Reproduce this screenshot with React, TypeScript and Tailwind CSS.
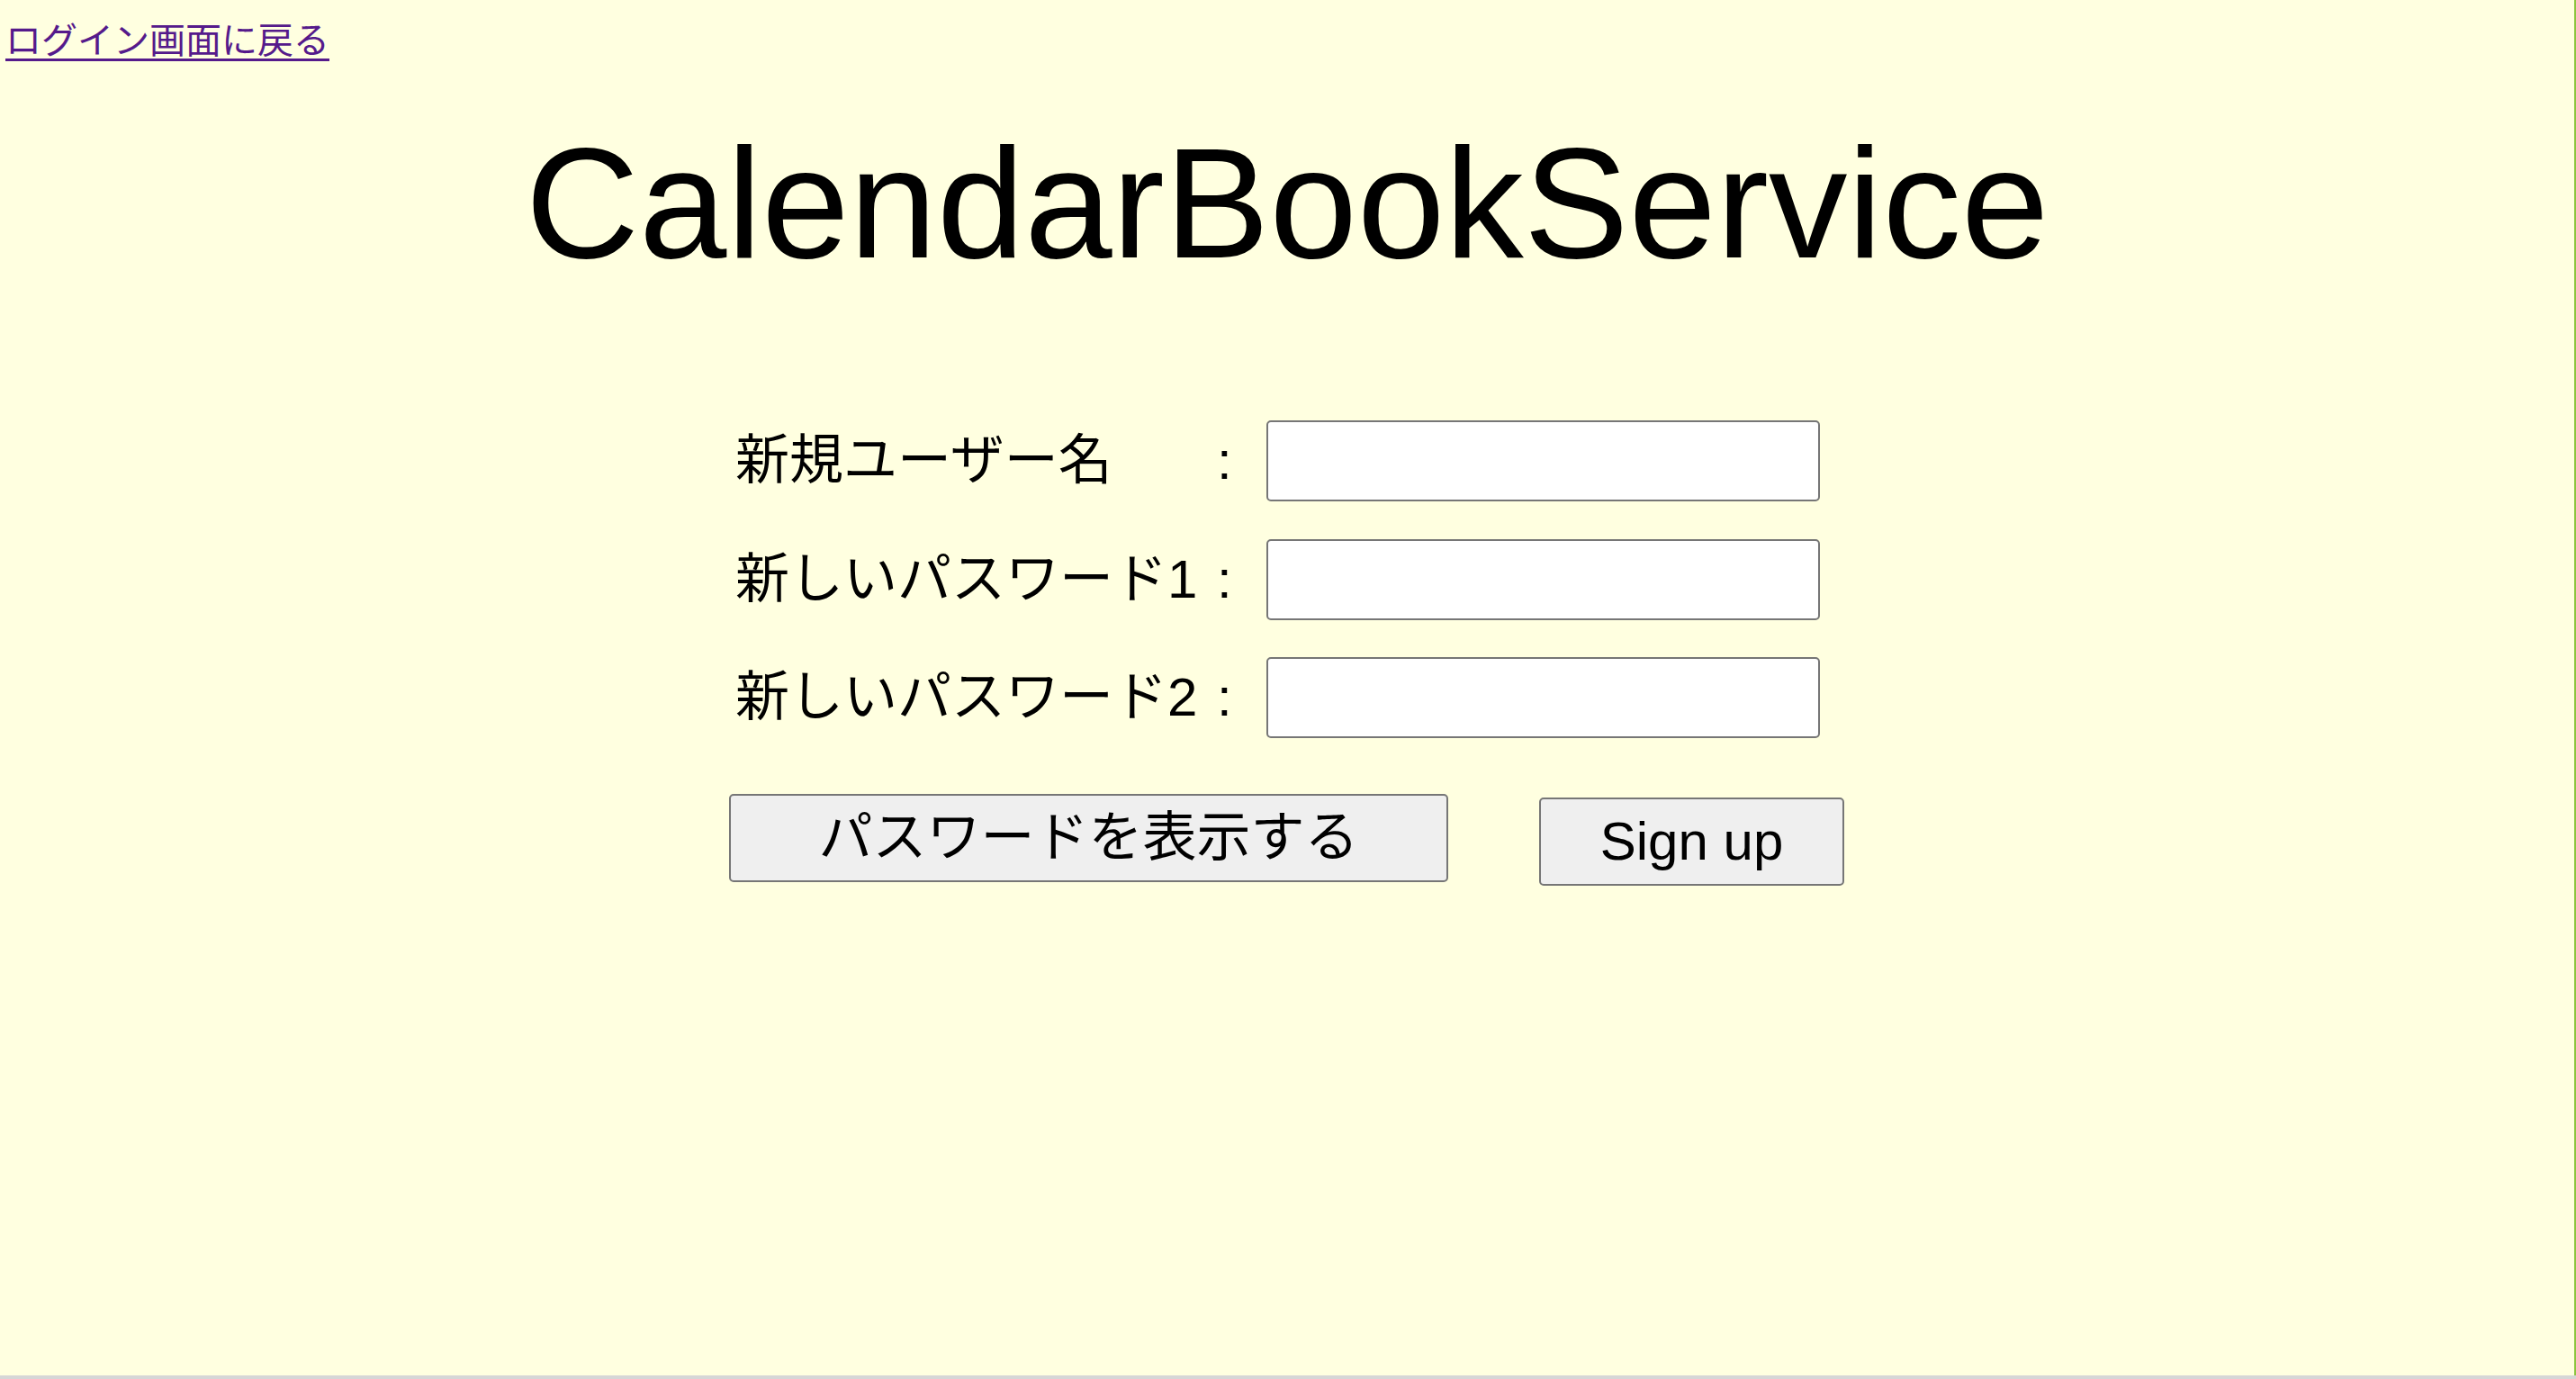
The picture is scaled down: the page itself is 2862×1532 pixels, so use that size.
import React from "react";

export default function App() {
  return (
    <div className="flex h-[1532px] w-full flex-col font-['Liberation_Sans','Noto_Sans_CJK_JP',sans-serif] text-black">
      <div className="flex flex-1 flex-col border-r-2 border-[#8cc43f] bg-[#ffffe0]">
        <div className="pl-[6px] pt-[13px]">
          <a
            href="#"
            className="font-['Noto_Sans_CJK_JP',sans-serif] text-[40px] leading-[58px] text-[#551a8b] underline decoration-[2.5px] underline-offset-[6px]"
          >
            ログイン画面に戻る
          </a>
        </div>
        <h1 className="mt-[67px] text-center text-[175px] font-normal leading-[175px]">
          CalendarBookService
        </h1>
        <div className="mx-auto mt-[154px] flex w-[1240px] flex-col gap-[41.5px] pl-[2px]">
          <div className="flex h-[90px] items-center">
            <div className="w-[540px] pl-[5px] text-[60px]">新規ユーザー名</div>
            <div className="w-[55px] text-[60px]">:</div>
            <input className="h-[90px] w-[615px] rounded-[5px] border-2 border-[#767676] bg-white" />
          </div>
          <div className="flex h-[90px] items-center">
            <div className="w-[540px] pl-[5px] text-[60px]">新しいパスワード1</div>
            <div className="w-[55px] text-[60px]">:</div>
            <input type="password" className="h-[90px] w-[615px] rounded-[5px] border-2 border-[#767676] bg-white" />
          </div>
          <div className="flex h-[90px] items-center">
            <div className="w-[540px] pl-[5px] text-[60px]">新しいパスワード2</div>
            <div className="w-[55px] text-[60px]">:</div>
            <input type="password" className="h-[90px] w-[615px] rounded-[5px] border-2 border-[#767676] bg-white" />
          </div>
        </div>
        <div className="mx-auto mt-[62px] flex w-[1240px] items-start">
          <button className="flex h-[98px] w-[799px] items-center justify-center rounded-[5px] border-2 border-[#767676] bg-[#efefef] text-[60px]">
            パスワードを表示する
          </button>
          <button className="ml-[101px] mt-[4px] flex h-[98px] w-[339px] items-center justify-center rounded-[5px] border-2 border-[#767676] bg-[#efefef] text-[60px]">
            Sign up
          </button>
        </div>
      </div>
      <div className="h-[4px] bg-[#d6d6d6]" />
    </div>
  );
}
